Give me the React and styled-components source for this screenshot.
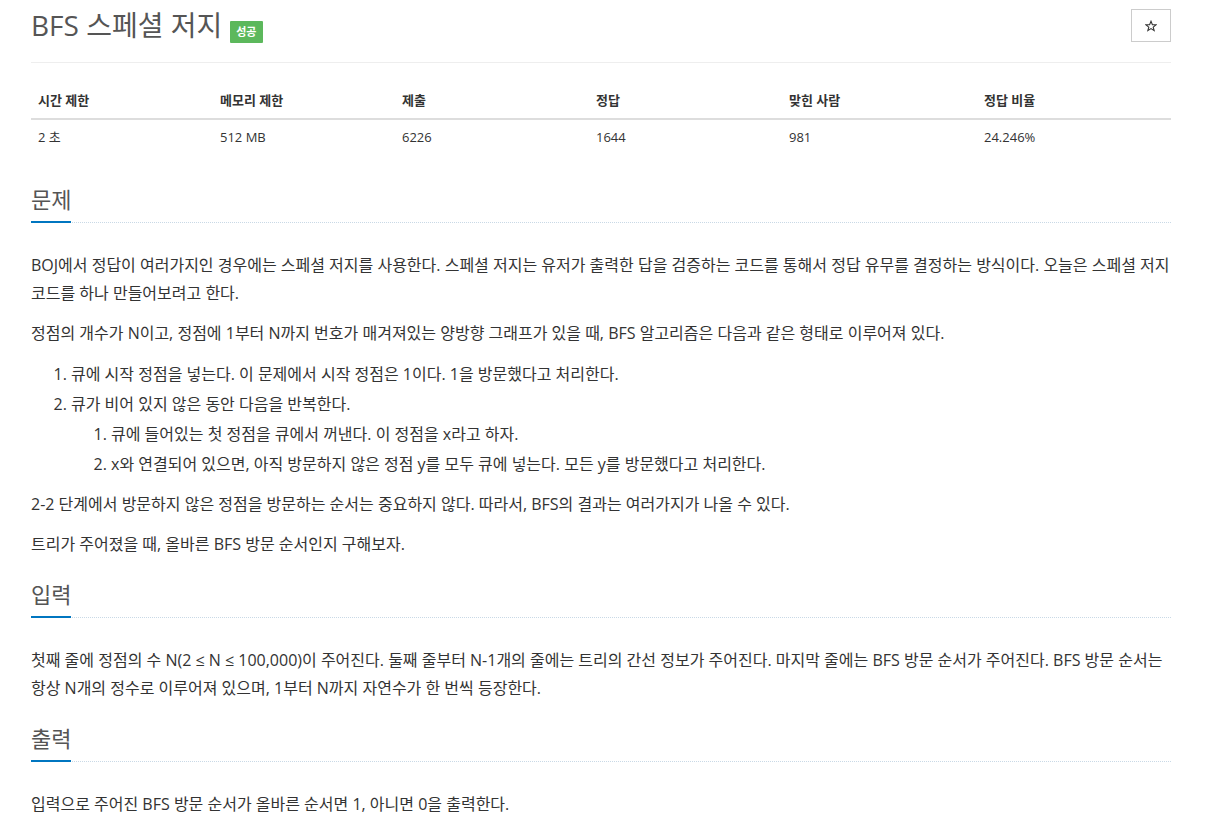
import React from 'react';
import styled, { createGlobalStyle } from 'styled-components';

const GlobalStyle = createGlobalStyle`
  html, body {
    margin: 0;
    padding: 0;
    background: #fff;
  }
  body {
    font-family: "Open Sans", "Noto Sans CJK KR", sans-serif;
    color: #333;
  }
`;

const Page = styled.div`
  width: 1140px;
  padding: 9px 0 0 31px;
`;

const Header = styled.div`
  display: flex;
  align-items: center;
  justify-content: space-between;
  height: 33px;
  padding-bottom: 20px;
  border-bottom: 1px solid #eee;
`;

const Title = styled.h1`
  display: flex;
  align-items: center;
  margin: 0;
  font-size: 28px;
  font-weight: 400;
  color: #555;
  line-height: 33px;
`;

const Badge = styled.span`
  display: inline-block;
  margin: 12px 0 0 8px;
  height: 22px;
  padding: 0 6px;
  background: #5cb85c;
  color: #fff;
  font-size: 11px;
  font-weight: 700;
  line-height: 22px;
  border-radius: 1px;
`;

const StarButton = styled.button`
  width: 40px;
  height: 33px;
  display: flex;
  align-items: center;
  justify-content: center;
  background: #fff;
  border: 1px solid #ccc;
  border-radius: 0;
  padding: 0;
  cursor: pointer;
`;

const InfoTable = styled.table`
  width: 100%;
  margin: 20px 0 33px;
  border-collapse: collapse;
  table-layout: fixed;
  font-size: 13px;
  line-height: 18.6px;
`;

const Th = styled.th`
  box-sizing: border-box;
  width: ${p => p.$w}px;
  padding: 8px 7px;
  text-align: left;
  font-weight: 700;
  color: #333;
  border-bottom: 2px solid #ddd;
`;

const Td = styled.td`
  padding: 8px 7px;
  color: #333;
`;

const Section = styled.section`
  margin-bottom: 24px;
`;

const Headline = styled.h2`
  margin: 0 0 28px;
  font-size: 22px;
  font-weight: 400;
  line-height: 24px;
  color: #555;
  border-bottom: 1px dotted #c9d9e6;
`;

const HeadlineText = styled.span`
  display: inline-block;
  padding-bottom: 10px;
  margin-bottom: -1px;
  border-bottom: 2px solid #0076c0;
`;

const Text = styled.p`
  margin: 0 0 12px;
  font-size: 16px;
  line-height: 28px;
  color: #333;
  word-break: break-all;

  &:last-child {
    margin-bottom: 0;
  }
`;

const List = styled.ol`
  margin: ${p => (p.$nested ? '0' : '0 0 11px')};
  padding-left: 40px;
  font-size: 16px;
  line-height: 30px;
  color: #333;
`;

const Star = () => (
  <svg width="12" height="12" viewBox="0 0 24 24" fill="none" stroke="#333" strokeWidth="2.2" strokeLinejoin="miter">
    <polygon points="12,2.5 14.8,9.3 22,9.6 16.4,14.2 18.3,21.3 12,17.3 5.7,21.3 7.6,14.2 2,9.6 9.2,9.3" />
  </svg>
);

const stats = [
  { label: '시간 제한', value: '2 초', w: 182 },
  { label: '메모리 제한', value: '512 MB', w: 182 },
  { label: '제출', value: '6226', w: 194 },
  { label: '정답', value: '1644', w: 193 },
  { label: '맞힌 사람', value: '981', w: 195 },
  { label: '정답 비율', value: '24.246%', w: 194 },
];

export default function App() {
  return (
    <>
      <GlobalStyle />
      <Page>
        <Header>
          <Title>
            BFS 스페셜 저지
            <Badge>성공</Badge>
          </Title>
          <StarButton aria-label="즐겨찾기">
            <Star />
          </StarButton>
        </Header>

        <InfoTable>
          <thead>
            <tr>
              {stats.map(s => (
                <Th key={s.label} $w={s.w}>{s.label}</Th>
              ))}
            </tr>
          </thead>
          <tbody>
            <tr>
              {stats.map(s => (
                <Td key={s.label}>{s.value}</Td>
              ))}
            </tr>
          </tbody>
        </InfoTable>

        <Section>
          <Headline><HeadlineText>문제</HeadlineText></Headline>
          <Text>
            BOJ에서 정답이 여러가지인 경우에는 스페셜 저지를 사용한다. 스페셜 저지는 유저가 출력한 답을 검증하는 코드를 통해서 정답 유무를 결정하는 방식이다. 오늘은 스페셜 저지 코드를 하나 만들어보려고 한다.
          </Text>
          <Text>
            정점의 개수가 N이고, 정점에 1부터 N까지 번호가 매겨져있는 양방향 그래프가 있을 때, BFS 알고리즘은 다음과 같은 형태로 이루어져 있다.
          </Text>
          <List>
            <li>큐에 시작 정점을 넣는다. 이 문제에서 시작 정점은 1이다. 1을 방문했다고 처리한다.</li>
            <li>
              큐가 비어 있지 않은 동안 다음을 반복한다.
              <List $nested>
                <li>큐에 들어있는 첫 정점을 큐에서 꺼낸다. 이 정점을 x라고 하자.</li>
                <li>x와 연결되어 있으면, 아직 방문하지 않은 정점 y를 모두 큐에 넣는다. 모든 y를 방문했다고 처리한다.</li>
              </List>
            </li>
          </List>
          <Text>2-2 단계에서 방문하지 않은 정점을 방문하는 순서는 중요하지 않다. 따라서, BFS의 결과는 여러가지가 나올 수 있다.</Text>
          <Text>트리가 주어졌을 때, 올바른 BFS 방문 순서인지 구해보자.</Text>
        </Section>

        <Section>
          <Headline><HeadlineText>입력</HeadlineText></Headline>
          <Text>
            첫째 줄에 정점의 수 N(2 ≤ N ≤ 100,000)이 주어진다. 둘째 줄부터 N-1개의 줄에는 트리의 간선 정보가 주어진다. 마지막 줄에는 BFS 방문 순서가 주어진다. BFS 방문 순서는 항상 N개의 정수로 이루어져 있으며, 1부터 N까지 자연수가 한 번씩 등장한다.
          </Text>
        </Section>

        <Section>
          <Headline><HeadlineText>출력</HeadlineText></Headline>
          <Text>입력으로 주어진 BFS 방문 순서가 올바른 순서면 1, 아니면 0을 출력한다.</Text>
        </Section>
      </Page>
    </>
  );
}
